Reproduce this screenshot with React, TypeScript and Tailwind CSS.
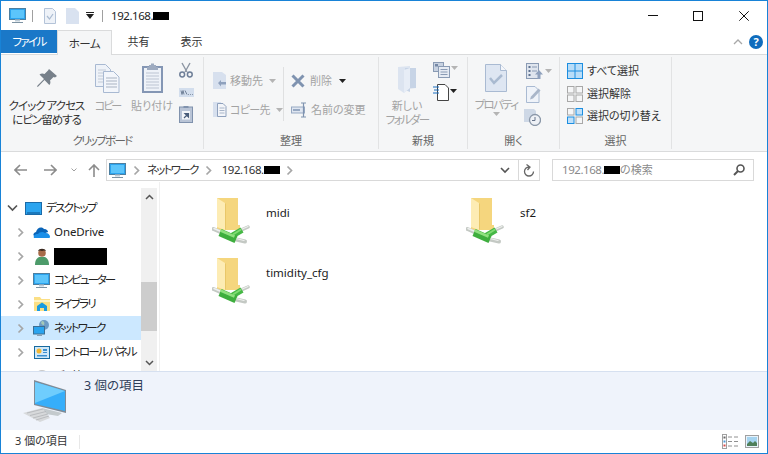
import React from "react";

const KANA = "text-[11.5px] tracking-[-1.7px]";

const Arrow = ({ c = "#b4b4b4", className = "" }: { c?: string; className?: string }) => (
  <svg width="7" height="4" viewBox="0 0 7 4" className={className}><path d="M0 0h7L3.5 4z" fill={c} /></svg>
);

const Monitor = ({ size = 17 }: { size?: number }) => (
  <svg width={size} height={size} viewBox="0 0 17 17">
    <rect x="0.5" y="1.5" width="16" height="11" fill="#2ba4ef" stroke="#4d7fa0" />
    <path d="M2 3h13v8H2z" fill="#5cc5fb" />
    <path d="M6 12.500h5v2H6z" fill="#bccbd6" />
    <path d="M3 15h11v1H3z" fill="#7d93a3" />
  </svg>
);

const Chevron = () => (
  <svg width="9" height="11" viewBox="0 0 9 11"><path d="M2.500 1.500l4 4-4 4" fill="none" stroke="#a6a6a6" strokeWidth="1.700" /></svg>
);

const ChevronDownDark = () => (
  <svg width="11" height="8" viewBox="0 0 11 8"><path d="M1 1.500l4.500 4.500L10 1.500" fill="none" stroke="#555" strokeWidth="1.700" /></svg>
);

const BlackBox = ({ w, h }: { w: number; h: number }) => (
  <span className="inline-block bg-black shrink-0" style={{ width: w, height: h }} />
);

const PinIcon = () => (
  <svg width="22" height="22" viewBox="0 0 22 22">
    <path d="M13 1l8 7-2 1.500-1.500-.5-3.500 3.500c.8 1.800.4 3.500-.7 4.600L8.500 12l-6.200 6.500L1 19l.5-1.400L8 11 3.500 6.500C5 5.300 6.800 5 8.500 6L12 2.500z" fill="#77808a" />
  </svg>
);

const CopyIcon = () => (
  <svg width="25" height="29" viewBox="0 0 25 29">
    <path d="M.5.500h10l5 5v17H.5z" fill="#eef2f8" stroke="#a8b9d2" />
    <path d="M3 6h8M3 9h10M3 12h10M3 15h10M3 18h10" stroke="#c2cad6" />
    <path d="M8.500 7.500h10l5.500 5.500v15.500H8.500z" fill="#f3f6fb" stroke="#a8b9d2" />
    <path d="M11 14h11M11 17h11M11 20h11M11 23h11" stroke="#a9b3c2" />
  </svg>
);

const PasteIcon = () => (
  <svg width="21" height="30" viewBox="0 0 21 30">
    <rect x="1" y="4" width="19" height="25" fill="#eef2f8" stroke="#8496b4" strokeWidth="2" />
    <path d="M7 4V2h2V0.500h3V2h2v2h2v3H5V4z" fill="#9eabc0" />
    <path d="M4 10h13M4 13h13M4 16h13M4 19h13M4 22h13M4 25h13" stroke="#bcc4d2" />
  </svg>
);

const Scissors = () => (
  <svg width="16" height="16" viewBox="0 0 16 16">
    <path d="M4 1l5 9M12 1L7 10" stroke="#8c95a2" strokeWidth="1.400" fill="none" />
    <circle cx="4.200" cy="12.500" r="2.400" fill="none" stroke="#6f7f98" strokeWidth="1.500" />
    <circle cx="11.800" cy="12.500" r="2.400" fill="none" stroke="#6f7f98" strokeWidth="1.500" />
  </svg>
);

const PathIcon = () => (
  <svg width="15" height="9" viewBox="0 0 15 9">
    <rect width="15" height="9" fill="#d3deed" />
    <path d="M2 2.500l1 4 1-4 1 4M6 2.500l2 4M9 6.500h.8M11 6.500h.8M13 6.500h.8" stroke="#5c6d85" strokeWidth="0.800" fill="none" />
  </svg>
);

const ShortcutIcon = () => (
  <svg width="14" height="18" viewBox="0 0 14 18">
    <rect x="0.500" y="2" width="13" height="15.500" fill="#b9c4d6" stroke="#8092ad" />
    <path d="M4.500 1h5v2h-5z" fill="#8092ad" />
    <rect x="3" y="6" width="8" height="8.500" fill="#f3f5f9" />
    <path d="M5 13l3-3M6 8.500h3.500V12z" stroke="#4a5d7a" fill="#4a5d7a" strokeWidth="1.200" />
  </svg>
);

const MoveIcon = () => (
  <svg width="14" height="17" viewBox="0 0 14 17">
    <path d="M0 0h9l4 3v14H0z" fill="#d7e0ee" />
    <path d="M5 11l3-3v2h5v2.500H8v2z" fill="#8fa1bd" />
  </svg>
);

const CopyToIcon = () => (
  <svg width="14" height="17" viewBox="0 0 14 17">
    <path d="M0 1h8v15H0z" fill="#d7e0ee" />
    <path d="M4.500 2.500H10l3 3v10H4.500z" fill="#f3f5f9" stroke="#8fa1bd" />
    <path d="M6.500 7h5M6.500 9.500h5M6.500 12h5" stroke="#a8b5c8" />
  </svg>
);

const DeleteX = () => (
  <svg width="14" height="14" viewBox="0 0 14 14"><path d="M1.500 1.500l11 11M12.500 1.500l-11 11" stroke="#7f93b0" strokeWidth="3" /></svg>
);

const RenameIcon = () => (
  <svg width="16" height="16" viewBox="0 0 16 16">
    <rect x="0.500" y="5" width="13" height="6" fill="#dfe6f1" stroke="#97a9c3" />
    <rect x="2" y="7" width="7" height="2" fill="#97a9c3" />
    <path d="M10 1h5M12.500 1v14M10 15h5" stroke="#7f93b0" strokeWidth="1.200" fill="none" />
  </svg>
);

const NewFolderIcon = () => (
  <svg width="19" height="28" viewBox="0 0 19 28">
    <path d="M0 1l12-1v22l-6 5-6-4z" fill="#dce4f0" />
    <path d="M7 2h11v20l-6 .5V26l-5-2z" fill="#c7d4e6" />
    <path d="M6 4l6-2v20l-6 5z" fill="#e7edf6" />
  </svg>
);

const NewItemsTop = () => (
  <svg width="17" height="16" viewBox="0 0 17 16">
    <rect x="0.500" y="0.500" width="10" height="9" fill="#c8d2e1" stroke="#8a9bb4" />
    <rect x="2" y="2" width="3" height="2.500" fill="#7588a6" />
    <rect x="5.500" y="4.500" width="11" height="11" fill="#e6ebf3" stroke="#8a9bb4" />
    <path d="M7.500 7.500h7M7.500 10h7M7.500 12.500h7" stroke="#8a9bb4" />
  </svg>
);

const NewItemIcon = () => (
  <svg width="16" height="17" viewBox="0 0 16 17">
    <path d="M4.500.500H12l3.500 3.500v12.500h-11z" fill="#fff" stroke="#444" />
    <path d="M0 3h6M1 6h5M0 9h6" stroke="#1b6fc2" strokeWidth="1.200" />
  </svg>
);

const CheckDocBig = () => (
  <svg width="22" height="28" viewBox="0 0 22 28">
    <path d="M.5.500h15l6 6v21H.500z" fill="#dee6f2" stroke="#a9bad2" />
    <path d="M15.500.500v6h6" fill="#f4f6fa" stroke="#a9bad2" />
    <path d="M5 14l4 5 8-8" fill="none" stroke="#a9bad0" strokeWidth="2.500" />
  </svg>
);

const OpenIcon = () => (
  <svg width="17" height="16" viewBox="0 0 17 16">
    <rect x="0.500" y="0.500" width="12" height="15" fill="#dfe5ee" stroke="#8a9bb4" />
    <path d="M2.500 3h2v2h-2zM2.500 7h2v2h-2zM2.500 11h2v2h-2z" fill="#5f7290" />
    <path d="M6 4h5M6 8h5" stroke="#8a9bb4" />
    <path d="M13 7l4 4.500h-2.500V16h-3v-4.500H9z" fill="#8fa1bd" />
  </svg>
);

const EditIcon = () => (
  <svg width="15" height="17" viewBox="0 0 15 17">
    <path d="M.5.500H9l4 4v12H.500z" fill="#eff3f9" stroke="#a9bad2" />
    <path d="M4 13.500l1-3 7.500-8 2 2-7.500 8z" fill="#a9b6c9" />
  </svg>
);

const HistoryIcon = () => (
  <svg width="17" height="17" viewBox="0 0 17 17">
    <path d="M0 0h10l2 2v11H0z" fill="#ced8e6" />
    <circle cx="11" cy="11" r="5.500" fill="#eef1f6" stroke="#8a97a8" strokeWidth="1.300" />
    <path d="M11 8v3.500H8" stroke="#66748a" fill="none" />
  </svg>
);

const SelIcon = ({ on }: { on: boolean[] }) => (
  <svg width="16" height="16" viewBox="0 0 16 16">
    {[[0, 0], [8.5, 0], [0, 8.5], [8.5, 8.5]].map(([x, y], i) => (
      <rect key={i} x={x + 0.5} y={y + 0.5} width="6.500" height="6.500" fill={on[i] ? "#bfe0fa" : "#f5f6f7"} stroke={on[i] ? "#1c8ee0" : "#a8a8a8"} />
    ))}
  </svg>
);

const SelectAllIcon = () => (
  <svg width="16" height="16" viewBox="0 0 16 16">
    <rect x="0.500" y="0.500" width="15" height="15" fill="#b9ddf8" stroke="#1c8ee0" />
    <path d="M8 0v16M0 8h16" stroke="#1c8ee0" />
  </svg>
);

const FolderShare = () => (
  <svg width="38" height="48" viewBox="0 0 38 48">
    <path d="M5 1h21v27h2v5H5z" fill="#f5d67e" />
    <path d="M5 1l8 5v27l-8-3z" fill="#fdecb4" />
    <path d="M13 6l1 1v25l-1 1z" fill="#e9c768" />
    <path d="M1.500 32l8 3.500" stroke="#c4c9c4" strokeWidth="4" strokeLinecap="round" />
    <path d="M2 31.500l7 3" stroke="#eef0ee" strokeWidth="1.500" strokeLinecap="round" />
    <path d="M36 30l-9 4" stroke="#c4c9c4" strokeWidth="3.500" strokeLinecap="round" />
    <path d="M36 29.500l-8 3.500" stroke="#eef0ee" strokeWidth="1.200" strokeLinecap="round" />
    <path d="M22 42l11 2.500" stroke="#c4c9c4" strokeWidth="4" strokeLinecap="round" />
    <path d="M24 41.500l8 2" stroke="#eef0ee" strokeWidth="1.200" strokeLinecap="round" />
    <path d="M18 40l12-7" stroke="#45b745" strokeWidth="6" />
    <path d="M8 35.500l16 7" stroke="#3eae3e" strokeWidth="7.500" />
    <path d="M8.500 33.500l14 6" stroke="#8fe07f" strokeWidth="2.500" />
    <path d="M21 37.500l8-5" stroke="#7fdc72" strokeWidth="2" />
  </svg>
);

const OneDriveIcon = () => (
  <svg width="17" height="11" viewBox="0 0 17 11">
    <path d="M3 5c1-4 5-6 8-3 3 0 4 2 4 3l-8 3-6 1C0 8 0 6 3 5z" fill="#0a64b8" />
    <path d="M1 11c-1-2 1-4 4-4 1-2 5-3 7-1 3-.5 5 2 5 3.500 0 1-.5 1.500-1 1.500z" fill="#1b8fe8" />
  </svg>
);

const UserIcon = () => (
  <svg width="14" height="17" viewBox="0 0 14 17">
    <circle cx="7" cy="5" r="3.800" fill="#a76b49" />
    <path d="M3 3c1-3 7-3 8 0l-2-.5c-1 .5-3 .5-4 0z" fill="#3a2a20" />
    <path d="M0 17c0-5 2-7 4-8h6c2 1 4 3 4 8z" fill="#4d9b6a" />
  </svg>
);

const LibraryIcon = () => (
  <svg width="16" height="14" viewBox="0 0 16 14">
    <path d="M0 0h6l1.500 2H16v12H0z" fill="#fbdf85" />
    <path d="M0 3h16v2H0z" fill="#fff3c4" />
    <path d="M3 9l5-3.500L13 9v5h-3v-3H6v3H3z" fill="#1a9be0" />
  </svg>
);

const NetworkIcon = () => (
  <svg width="17" height="16" viewBox="0 0 17 16">
    <circle cx="11" cy="5" r="5" fill="#6e9bc4" />
    <path d="M9 1c2 0 3 2 2 4-2 0-4-2-2-4z" fill="#a5c9b8" />
    <rect x="0.500" y="6.500" width="11" height="7.500" fill="#2ba4ef" stroke="#3d6e92" />
    <path d="M4 14.500h5V16H4z" fill="#8aa0b2" />
  </svg>
);

const ControlIcon = () => (
  <svg width="16" height="13" viewBox="0 0 16 13">
    <rect x="0.500" y="0.500" width="15" height="12" fill="#cfe8f8" stroke="#176a9f" />
    <circle cx="5" cy="5" r="2.500" fill="#f2b632" />
    <path d="M9 3h4v2H9zM9 6h4v1H9zM3 9h10v1.500H3z" fill="#3c8fd0" />
  </svg>
);

const GearStub = () => (
  <svg width="16" height="14" viewBox="0 0 16 14"><ellipse cx="8" cy="8" rx="7" ry="7" fill="#c8c8c8" /></svg>
);

const BigPC = () => (
  <svg width="48" height="46" viewBox="0 0 48 46">
    <path d="M20 29l20 5-4 3-12-2z" fill="#c4cacd" />
    <path d="M12 1l32 10v23l-32-8z" fill="#7f8b97" />
    <path d="M13 3l30 9v20L13 25z" fill="#36aefa" />
    <path d="M13 3l30 9L13 24z" fill="#6fcdfd" />
    <path d="M1 34l19-5 8 10-10 4z" fill="#d7d9db" />
    <path d="M5 34l16-4M8 36.500l16-4M11 39l15-4M14 41l13-4" stroke="#b1b4b7" strokeWidth="0.800" />
  </svg>
);

const NavRow = ({ icon, children, sel }: { icon: React.ReactNode; children: React.ReactNode; sel?: boolean }) => (
  <div className={`h-6 shrink-0 flex items-center ${sel ? "bg-[#cce8ff]" : ""}`}>
    <span className="w-[30px] pl-[15px] flex items-center shrink-0"><Chevron /></span>
    <span className="w-[21px] flex justify-center shrink-0">{icon}</span>
    <span className="pl-[2px] whitespace-nowrap text-[#222]">{children}</span>
  </div>
);

const FileItem = ({ name }: { name: string }) => (
  <div className="flex items-start h-[60px]">
    <div className="ml-[52px] w-[38px] shrink-0"><FolderShare /></div>
    <span className="ml-[16px] mt-[7px] text-[11.5px] text-[#1a1a1a]">{name}</span>
  </div>
);

const GroupLabel = ({ children }: { children: React.ReactNode }) => (
  <div className="h-[16px] mt-auto flex items-center justify-center text-[#666]">{children}</div>
);

const Ribbon = () => (
  <div className="h-[97px] shrink-0 flex bg-[#f5f6f7] border-b border-[#dadbdc] text-[#3c3c3c] leading-[14px]">
    <div className="w-[203px] flex flex-col border-r border-[#e2e3e4] my-[2px] shrink-0">
      <div className="flex">
        <div className="w-[91px] flex flex-col items-center pt-[11px]">
          <PinIcon />
          <div className="mt-[9px] text-center text-[#333] text-[11.5px] tracking-[-1px] whitespace-nowrap">クイック アクセス<br />にピン留めする</div>
        </div>
        <div className="w-[31px] flex flex-col items-center pt-[7px] text-[#a3a3a3]">
          <CopyIcon />
          <div className="mt-[6px] whitespace-nowrap text-[11px] tracking-[-2px]">コピー</div>
        </div>
        <div className="w-[58px] flex flex-col items-center pt-[6px] text-[#a3a3a3]">
          <PasteIcon />
          <div className="mt-[6px] whitespace-nowrap">貼り付け</div>
        </div>
        <div className="flex flex-col items-center pt-[5px] ml-[-4px] w-[18px]">
          <Scissors />
          <div className="mt-[10px]"><PathIcon /></div>
          <div className="mt-[8px]"><ShortcutIcon /></div>
        </div>
      </div>
      <GroupLabel><span className={KANA}>クリップボード</span></GroupLabel>
    </div>

    <div className="w-[175px] flex flex-col border-r border-[#e2e3e4] my-[2px] shrink-0">
      <div className="flex pt-[10px]">
        <div className="w-[80px] flex flex-col text-[#a3a3a3] pl-[9px] pt-[5px] gap-[12px] border-r border-[#dfe0e1] h-[54px]">
          <div className="flex items-center h-[17px] gap-[3px]"><MoveIcon /><span>移動先</span><Arrow className="ml-[3px]" /></div>
          <div className="flex items-center h-[17px] gap-[3px]"><CopyToIcon /><span className="whitespace-nowrap text-[11px] tracking-[-0.7px]">コピー先</span><Arrow className="ml-[3px]" /></div>
        </div>
        <div className="flex flex-col text-[#a3a3a3] pl-[7px] pt-[6px] gap-[13px]">
          <div className="flex items-center h-[16px] gap-[5px]"><DeleteX /><span>削除</span><Arrow c="#222" className="ml-[2px]" /></div>
          <div className="flex items-center h-[16px] gap-[4px]"><RenameIcon /><span>名前の変更</span></div>
        </div>
      </div>
      <GroupLabel>整理</GroupLabel>
    </div>

    <div className="w-[89px] flex flex-col border-r border-[#e2e3e4] my-[2px] shrink-0">
      <div className="flex">
        <div className="w-[54px] flex flex-col items-center pt-[9px] text-[#a3a3a3] ml-[1px]">
          <NewFolderIcon />
          <div className="mt-[5px] text-center whitespace-nowrap">新しい<br /><span className={KANA}>フォルダー</span></div>
        </div>
        <div className="flex flex-col pt-[5px] ml-[-1px]">
          <div className="flex items-center gap-[1px]"><NewItemsTop /><Arrow className="mt-[-4px]" /></div>
          <div className="flex items-center gap-[1px] mt-[6px]"><NewItemIcon /><Arrow c="#222" className="mt-[-4px]" /></div>
        </div>
      </div>
      <GroupLabel>新規</GroupLabel>
    </div>

    <div className="w-[92px] flex flex-col border-r border-[#e2e3e4] my-[2px] shrink-0">
      <div className="flex">
        <div className="w-[56px] flex flex-col items-center pt-[7px] text-[#a3a3a3]">
          <CheckDocBig />
          <div className={`mt-[6px] whitespace-nowrap ${KANA}`}>プロパティ</div>
          <Arrow />
        </div>
        <div className="flex flex-col pt-[6px] ml-[2px]">
          <div className="flex items-center gap-[2px]"><OpenIcon /><Arrow /></div>
          <div className="mt-[7px]"><EditIcon /></div>
          <div className="mt-[6px] ml-[-2px]"><HistoryIcon /></div>
        </div>
      </div>
      <GroupLabel>開く</GroupLabel>
    </div>

    <div className="w-[112px] flex flex-col border-r border-[#e2e3e4] my-[2px] shrink-0">
      <div className="flex flex-col pl-[7px] pt-[6px] text-[#333]">
        <div className="flex items-center gap-[4px] h-[16px]"><SelectAllIcon /><span>すべて選択</span></div>
        <div className="flex items-center gap-[4px] h-[16px] mt-[7px]"><SelIcon on={[false, false, false, false]} /><span>選択解除</span></div>
        <div className="flex items-center gap-[4px] h-[16px] mt-[6px]"><SelIcon on={[false, true, true, false]} /><span>選択の切り替え</span></div>
      </div>
      <GroupLabel>選択</GroupLabel>
    </div>
  </div>
);

export default function App() {
  return (
    <div
      className="w-[768px] h-[454px] flex flex-col overflow-hidden bg-white border border-[#1883d7] text-[11px] [font-feature-settings:'palt'] text-[#222]"
      style={{ fontFamily: "'Noto Sans','Noto Sans CJK JP',sans-serif" }}
    >
      {/* Title bar */}
      <div className="h-[29px] shrink-0 flex items-center">
        <div className="ml-[8px]"><Monitor /></div>
        <div className="ml-[6px] w-px h-[12px] bg-[#a0a0a0]" />
        <svg className="ml-[11px]" width="12" height="16" viewBox="0 0 12 16">
          <path d="M.5.500h8l3 3v12H.500z" fill="#eef2f8" stroke="#b4c3d8" />
          <path d="M3 8l2.500 3L9 6" fill="none" stroke="#a9bad0" strokeWidth="1.200" />
        </svg>
        <svg className="ml-[10px]" width="13" height="16" viewBox="0 0 13 16"><path d="M0 0h9l4 4v12H0z" fill="#d9e2f0" /></svg>
        <svg className="ml-[7px]" width="8" height="7" viewBox="0 0 8 7"><path d="M0 0h8v1H0zM0 2h8L4 7z" fill="#222" /></svg>
        <div className="ml-[8px] w-px h-[12px] bg-[#a0a0a0]" />
        <span className="ml-[8px] text-[11.5px] tracking-[-0.45px] flex items-center">192.168.<BlackBox w={16} h={8} /></span>
        <div className="ml-auto flex items-center pr-[18px]">
          <div className="w-[10px] h-px bg-[#111]" />
          <div className="ml-[35px] w-[10px] h-[10px] border border-[#111]" />
          <svg className="ml-[36px]" width="10" height="10" viewBox="0 0 10 10"><path d="M.3.300l9.400 9.400M9.700.300L.3 9.700" stroke="#111" /></svg>
        </div>
      </div>

      {/* Tabs */}
      <div className="h-[25px] shrink-0 flex items-stretch border-b border-[#dadbdc] text-[#333]">
        <div className="w-[56px] mb-[1px] bg-[#1a78c8] text-white flex items-center justify-center"><span className={KANA}>ファイル</span></div>
        <div className="w-[55px] h-[25px] bg-[#f5f6f7] border border-b-0 border-[#dadbdc] flex items-center justify-center pt-[1px]"><span className="text-[11.5px] tracking-[-0.5px]">ホーム</span></div>
        <div className="w-[53px] flex items-center justify-center pt-[1px]">共有</div>
        <div className="w-[53px] flex items-center justify-center pt-[1px]">表示</div>
        <div className="ml-auto flex items-center pr-[4px] gap-[6px]">
          <svg width="10" height="6" viewBox="0 0 10 6"><path d="M1 5l4-4 4 4" fill="none" stroke="#a8a8a8" strokeWidth="1.300" /></svg>
          <span className="w-[14px] h-[14px] rounded-full bg-[#0f6cbd] text-white font-bold text-[11px] leading-[14px] text-center">?</span>
        </div>
      </div>

      <Ribbon />

      {/* Navigation bar */}
      <div className="h-[30px] shrink-0 flex items-center pt-[6px]">
        <svg className="ml-[13px]" width="13" height="12" viewBox="0 0 13 12"><path d="M6 1L1 6l5 5M1 6h12" fill="none" stroke="#8c8c8c" strokeWidth="1.600" /></svg>
        <svg className="ml-[17px]" width="13" height="12" viewBox="0 0 13 12"><path d="M7 1l5 5-5 5M12 6H0" fill="none" stroke="#8c8c8c" strokeWidth="1.600" /></svg>
        <svg className="ml-[14px]" width="6" height="4" viewBox="0 0 6 4"><path d="M.5.500L3 3 5.500.500" fill="none" stroke="#a0a0a0" /></svg>
        <svg className="ml-[11px]" width="12" height="13" viewBox="0 0 12 13"><path d="M1 6l5-5 5 5M6 1v12" fill="none" stroke="#8c8c8c" strokeWidth="1.600" /></svg>
        <div className="ml-[6px] w-[434px] h-[22px] border border-[#d9d9d9] flex items-center text-[#333]">
          <span className="ml-[2px]"><Monitor /></span>
          <span className="ml-[6px]"><Chevron /></span>
          <span className={`ml-[6px] ${KANA}`}>ネットワーク</span>
          <span className="ml-[6px]"><Chevron /></span>
          <span className="ml-[9px] flex items-center text-[11.5px] tracking-[-0.45px]">192.168.<BlackBox w={16} h={8} /></span>
          <span className="ml-[5px]"><Chevron /></span>
          <div className="ml-auto flex items-center h-full">
            <svg className="mr-[8px]" width="10" height="7" viewBox="0 0 10 7"><path d="M1 1l4 4 4-4" fill="none" stroke="#555" strokeWidth="1.600" /></svg>
            <div className="w-[21px] h-full border-l border-[#d9d9d9] flex items-center justify-center">
              <svg width="12" height="13" viewBox="0 0 12 13"><path d="M6 3a4.500 4.500 0 1 0 4.500 4.500M3.500 .5L7 3 4.500 6" fill="none" stroke="#666" strokeWidth="1.300" /></svg>
            </div>
          </div>
        </div>
        <div className="ml-[12px] w-[202px] h-[22px] border border-[#d9d9d9] flex items-center pl-[9px] pr-[8px] text-[#8a8a8a]">
          <span className="flex items-center text-[11.5px]"><span className="tracking-[-0.45px]">192.168.</span><BlackBox w={16} h={8} /><span className="text-[11px]">の検索</span></span>
          <svg className="ml-auto" width="12" height="12" viewBox="0 0 12 12"><circle cx="7.500" cy="4.500" r="3.500" fill="none" stroke="#555" strokeWidth="1.600" /><path d="M5 7l-4 4" stroke="#555" strokeWidth="2" /></svg>
        </div>
      </div>

      {/* Body */}
      <div className="h-[189px] shrink-0 flex overflow-hidden">
        <div className="w-[140px] shrink-0 flex flex-col pt-[14px] overflow-hidden">
          <div className="h-6 shrink-0 flex items-center">
            <span className="w-[24px] pl-[6px] flex items-center shrink-0"><ChevronDownDark /></span>
            <svg className="shrink-0" width="17" height="13" viewBox="0 0 17 13"><rect x="0.500" y="0.500" width="16" height="12" fill="#2ba4ef" stroke="#1a6aa8" /><path d="M2 11h13" stroke="#0d4f8a" /></svg>
            <span className={`ml-[4px] whitespace-nowrap ${KANA}`}>デスクトップ</span>
          </div>
          <NavRow icon={<OneDriveIcon />}><span className="text-[11.5px] tracking-[-0.1px]">OneDrive</span></NavRow>
          <NavRow icon={<UserIcon />}><span className="flex"><BlackBox w={53} h={17} /></span></NavRow>
          <NavRow icon={<Monitor />}><span className="text-[11.5px] tracking-[-2px]">コンピューター</span></NavRow>
          <NavRow icon={<LibraryIcon />}><span className={KANA}>ライブラリ</span></NavRow>
          <NavRow sel icon={<NetworkIcon />}><span className={KANA}>ネットワーク</span></NavRow>
          <NavRow icon={<ControlIcon />}><span className={KANA}>コントロール パネル</span></NavRow>
          <NavRow icon={<GearStub />}><span className={KANA}>ごみ箱</span></NavRow>
        </div>
        <div className="w-[16px] shrink-0 mt-[6px] flex flex-col bg-[#f0f0f0] items-stretch">
          <div className="h-[17px] flex items-center justify-center"><svg width="9" height="6" viewBox="0 0 9 6"><path d="M1 5l3.500-3.500L8 5" fill="none" stroke="#555" strokeWidth="1.500" /></svg></div>
          <div className="h-[49px] mt-[77px] bg-[#cdcdcd]" />
          <div className="mt-auto h-[17px] flex items-center justify-center"><svg width="9" height="6" viewBox="0 0 9 6"><path d="M1 1l3.500 3.500L8 1" fill="none" stroke="#555" strokeWidth="1.500" /></svg></div>
        </div>
        <div className="w-[3px] shrink-0 border-r border-[#f0f0f0]" />
        <div className="flex-1 grid grid-cols-[254px_254px] content-start pt-[15px]">
          <FileItem name="midi" />
          <FileItem name="sf2" />
          <FileItem name="timidity_cfg" />
        </div>
      </div>

      {/* Details pane */}
      <div className="h-[59px] shrink-0 bg-[#eff3fb] border-t border-[#d6e0f0] flex">
        <div className="ml-[21px] mt-[7px]"><BigPC /></div>
        <div className="ml-[14px] mt-[5px] text-[12.5px] text-[#2f3f5a] whitespace-pre">3 個の項目</div>
      </div>

      {/* Status bar */}
      <div className="flex-1 flex items-center text-[#333]">
        <div className="ml-[14px] pr-[11px] border-r border-[#e8e8e8] h-[14px] flex items-center whitespace-pre">3 個の項目</div>
        <div className="ml-auto flex items-center gap-[7px] pr-[8px]">
          <svg width="16" height="15" viewBox="0 0 16 15">
            <rect x="0.500" y="0.500" width="4" height="14" fill="#fff" stroke="#a0a0a0" />
            <path d="M1.500 2.500h2v2h-2z" fill="#666" />
            <path d="M1.500 6.500h2v2h-2z" fill="#4a9ad8" />
            <path d="M1.500 10.500h2v2h-2z" fill="#d84a4a" />
            <path d="M6 3h4M12 3h4M6 7.500h4M12 7.500h4M6 12h4M12 12h4" stroke="#909090" />
          </svg>
          <svg width="14" height="13" viewBox="0 0 14 13">
            <rect x="0.500" y="0.500" width="13" height="12" fill="#e8f3fb" stroke="#a0a0a0" />
            <rect x="2" y="2" width="10" height="9" fill="#a6d4f0" />
            <path d="M2 9l3-3 3 2 2-2 2 2v3H2z" fill="#4f7f5a" />
          </svg>
        </div>
      </div>
    </div>
  );
}
